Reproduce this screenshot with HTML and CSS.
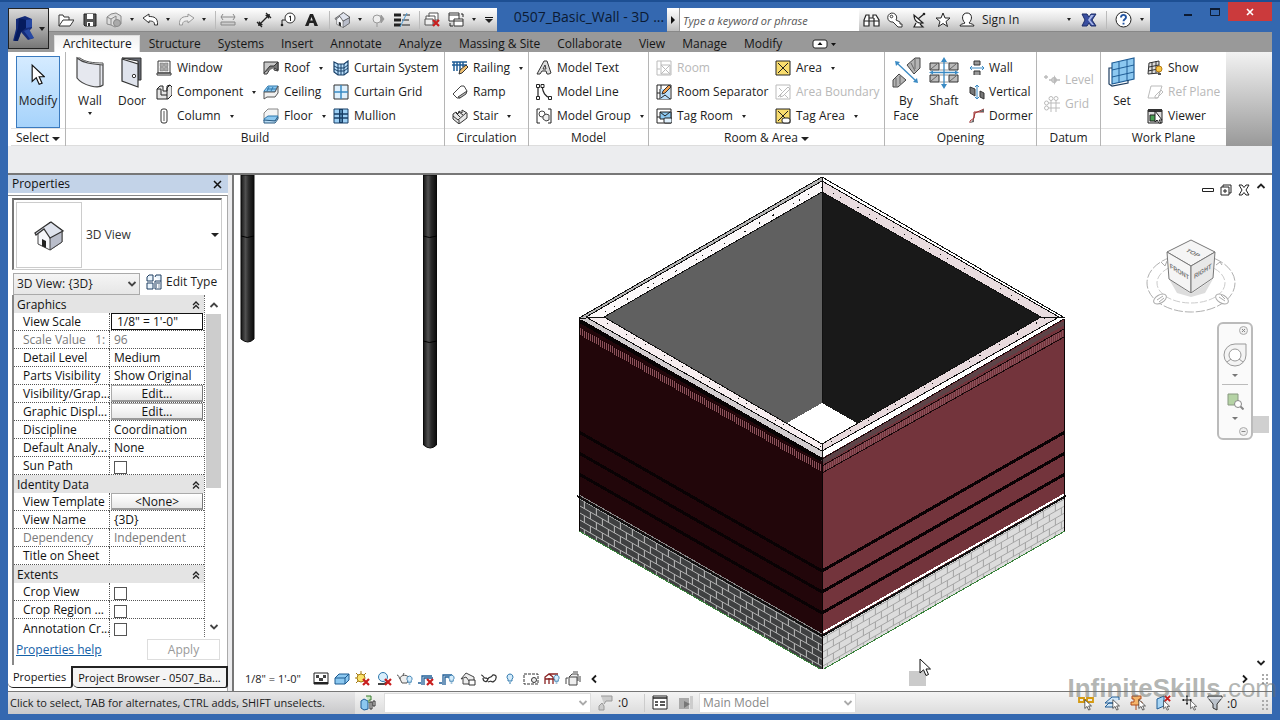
FILE: index.html
```html
<!DOCTYPE html>
<html lang="en">
<head>
<meta charset="utf-8">
<title>0507_Basic_Wall - 3D View</title>
<meta name="viewport" content="width=device-width, initial-scale=1">
<link rel="stylesheet" href="styles.css">
</head>
<body>
<svg class="defs" aria-hidden="true">
  <symbol id="cursor" viewBox="0 0 12 19"><path d="M1 1v14l3.500-3.200 2.500 5.700 2.500-1-2.500-5.500h4.500z" fill="#fff" stroke="#111"/></symbol>
  <symbol id="redx" viewBox="0 0 8 8"><path d="M1 1l6 6M7 1L1 7" stroke="#c81e1e" stroke-width="2.200"/></symbol>
  <symbol id="bulb" viewBox="0 0 8 12"><path d="M4 1a3 3 0 0 0-2 5.200V8h4V6.200A3 3 0 0 0 4 1zM3 10h2" fill="#d5ecfb" stroke="#2f78ad"/></symbol>
  <symbol id="house" viewBox="0 0 32 32"><path d="M4 15L17 3l3 3 9 5v12l-12 8-12-6V15" fill="#f6f7fa" stroke="#444"/><path d="M17 18l12-6v11l-12 8z" fill="#b9bdca" stroke="#444"/><path d="M2 14L12 7 18 3l12 9-13 7-6-9-8 6z" fill="#dfe3ed" stroke="#333" stroke-width="1.300"/><path d="M9 20l4 2v7l-4-2z" fill="#222"/></symbol>
  <symbol id="area" viewBox="0 0 16 16"><path d="M1 1h14v14H1z" fill="#f8dc6d" stroke="#222"/><path d="M3 3l10 10M13 3L3 13" stroke="#222"/></symbol>
  <symbol id="chev" viewBox="0 0 10 8"><path d="M1.500 2L5 5.500 8.500 2" fill="none" stroke="currentColor" stroke-width="1.800"/></symbol>
  <symbol id="collapse" viewBox="0 0 8 8"><path d="M1 4l3-3 3 3M1 7.500l3-3 3 3" fill="none" stroke="#222" stroke-width="1.300"/></symbol>
</svg>

<header class="top">
  <div class="app-cell">
    <button class="app-button" aria-label="Application menu">
      <svg width="24" height="28" viewBox="0 0 24 28"><path d="M3 4l9-3 7 3v9l-4 4 6 6-6 2-7-8-2 6-6 3 3-12z" fill="#142b78"/><path d="M6 3l7 2v8l-5 4-3 9-4 0 4-13z" fill="#061b5e"/><path d="M13 5l6-1v8l-6 1zM11 16l5-2 5 9-4 1z" fill="#2648a3"/></svg>
      <span class="tri mid-tri"></span>
    </button>
  </div>
  <div class="titlebar">
    <div class="qat">
      <button class="q" aria-label="Open"><svg width="16" height="14" viewBox="0 0 16 14"><path d="M1 13V2h4l1 2h5v3M1 13l4-6h11l-4 6z" fill="#fff" stroke="#333"/></svg></button>
      <button class="q" aria-label="Save"><svg width="14" height="14" viewBox="0 0 14 14"><path d="M1 1h12v12H2l-1-1z" fill="#555" stroke="#222"/><path d="M4 1h6v5H4zM4 9h6v4H4z" fill="#fff"/><path d="M5 10h2v3H5z" fill="#333"/></svg></button>
      <button class="q" aria-label="Synchronize"><svg width="17" height="16" viewBox="0 0 17 16"><path d="M1 5l4-3 5-1 5 3v8l-6 3-4-2-4-1zM1 5l4 2 5-3M5 7v6M10 4v4" fill="#ddd" stroke="#888"/><circle cx="11" cy="11" r="3.500" fill="#aaa" stroke="#888"/></svg></button>
      <button class="dd" aria-label="Synchronize options"><span class="tri"></span></button>
      <button class="q" aria-label="Undo"><svg width="17" height="13" viewBox="0 0 17 13"><path d="M1 5l6-4v2.500c5 0 9 1 8.500 8.500h-3c0-3-1-4-5.500-4V10z" fill="#fff" stroke="#333"/></svg></button>
      <button class="dd" aria-label="Undo list"><span class="tri"></span></button>
      <button class="q" aria-label="Redo"><svg width="17" height="13" viewBox="0 0 17 13"><path d="M16 5l-6-4v2.500C5 3.500 1 4.500 1.500 12h3c0-3 1-4 5.500-4v2z" fill="#eee" stroke="#999"/></svg></button>
      <button class="dd" aria-label="Redo list"><span class="tri"></span></button>
      <span class="sep"></span>
      <button class="q" aria-label="Measure"><svg width="16" height="14" viewBox="0 0 16 14"><path d="M1 4h14M3 1L1 4l2 3M13 1l2 3-2 3" stroke="#888" fill="none"/><path d="M1 9h14v3H1z" fill="#ccc" stroke="#888"/></svg></button>
      <button class="dd" aria-label="Measure options"><span class="tri"></span></button>
      <button class="q" aria-label="Aligned dimension"><svg width="16" height="16" viewBox="0 0 16 16"><path d="M3 13L13 3M1 10l5 5M10 1l5 5" stroke="#222" stroke-width="1.300"/><path d="M2 14l1-5 4 4zM14 2l-5 1 4 4z" fill="#222"/></svg></button>
      <button class="q" aria-label="Tag by category"><svg width="16" height="16" viewBox="0 0 16 16"><circle cx="10" cy="6" r="5" fill="#fff" stroke="#333"/><path d="M9 5l1.500-1v5M5 8H2v5" stroke="#222" fill="none"/><circle cx="2" cy="13" r="1.300" fill="#222"/></svg></button>
      <button class="q" aria-label="Text"><svg width="14" height="14" viewBox="0 0 14 14"><path d="M0 13L5 1h3l5 12h-3.500L8.500 10h-4L3.500 13zM5.300 7.500h2.500L6.500 4z" fill="#222" fill-rule="evenodd"/></svg></button>
      <span class="sep"></span>
      <button class="q" aria-label="Default 3D view"><svg width="17" height="17"><use href="#house"/></svg></button>
      <button class="dd" aria-label="3D view options"><span class="tri"></span></button>
      <button class="q" aria-label="Section"><svg width="14" height="14" viewBox="0 0 14 14"><circle cx="6" cy="6" r="4" fill="#eee" stroke="#999"/><path d="M10 2l3 4-3 4zM6 10v4" fill="#999" stroke="#999"/></svg></button>
      <button class="q" aria-label="Thin lines"><svg width="17" height="16" viewBox="0 0 17 16"><path d="M0 3h7M0 8h7M0 13h7" stroke="#222" stroke-width="3"/><path d="M9 3h7M8 8h7M8 13h8" stroke="#222"/><path d="M13 1L6 15" stroke="#4a9ad4"/></svg></button>
      <span class="sep"></span>
      <button class="q" aria-label="Close hidden windows"><svg width="17" height="16" viewBox="0 0 17 16"><path d="M5 5V1h9v7h-3M2 8V4h9v7H2" fill="#fff" stroke="#555"/><path d="M1 7h8v6H1z" fill="#eee" stroke="#555"/><use href="#redx" x="8" y="7" width="8" height="8"/></svg></button>
      <button class="q" aria-label="Switch windows"><svg width="17" height="16" viewBox="0 0 17 16"><path d="M1 1h10v8H1zM1 3h10" fill="#fff" stroke="#333"/><path d="M6 7h9v7H6zM6 9h9" fill="#fff" stroke="#333"/><path d="M2 11v3h3M13 2h2v3" stroke="#222" fill="none"/></svg></button>
      <button class="dd" aria-label="Window list"><span class="tri"></span></button>
      <button class="cust" aria-label="Customize toolbar"><span class="bar"></span><span class="tri lg"></span></button>
    </div>
    <div class="doc-title">0507_Basic_Wall - 3D ...</div>
    <div class="info">
      <button class="info-arrow" aria-label="Expand"><svg width="6" height="8" viewBox="0 0 6 8"><path d="M1 0l4 4-4 4z" fill="#111"/></svg></button>
      <input class="search" type="text" placeholder="Type a keyword or phrase" aria-label="Search">
      <button class="q" aria-label="Find"><svg width="17" height="16" viewBox="0 0 17 16"><path d="M1 14V8l2-5h3v3h4V3h3l3 5v6h-5V9H6v5zM1 9h5M11 9h5M6 6v3M11 6v3" fill="#fff" stroke="#222" stroke-width="1.200"/></svg></button>
      <button class="q" aria-label="Subscription"><svg width="17" height="16" viewBox="0 0 17 16"><path d="M9 8a4.500 4.500 0 1 0-3 2l5 5h4v-3h-2v-2z" fill="#fff" stroke="#333"/><circle cx="4.500" cy="4.500" r="1.300" fill="none" stroke="#333"/></svg></button>
      <button class="q" aria-label="Communication"><svg width="15" height="16" viewBox="0 0 15 16"><path d="M2 3c0 6 4 9 9 8zM6 7l6-5M4 11l-2 4h9l-3-3" fill="#fff" stroke="#222" stroke-width="1.200"/><circle cx="12" cy="2" r="1.300" fill="#222"/></svg></button>
      <button class="q" aria-label="Favorites"><svg width="16" height="16" viewBox="0 0 16 16"><path d="M8 1l2 5h5l-4 3.500 1.500 5L8 11.500l-4.500 3 1.500-5L1 6h5z" fill="#fff" stroke="#222"/></svg></button>
      <button class="signin"><svg width="16" height="16" viewBox="0 0 16 16"><path d="M1 14c0-2 3-2 5-3-4-4-3-10 2-10s6 6 2 10c2 1 5 1 5 3z" fill="#fff" stroke="#222"/></svg><span>Sign In</span><span class="tri"></span></button>
      <button class="q xchg" aria-label="Exchange apps"><svg width="16" height="14" viewBox="0 0 16 14"><path d="M1 1h5l2 3 2-3h5l-4 6 4 6h-5l-2-3-2 3H1l3-6z" fill="#3a4fa0" stroke="#1c2c66"/><path d="M10 2h3l-4 5 4 5h-2L7 7z" fill="#a9b7e8"/></svg></button>
      <span class="sep"></span>
      <button class="help" aria-label="Help"><svg width="17" height="17" viewBox="0 0 17 17"><circle cx="8.500" cy="8.500" r="7.500" fill="#fff" stroke="#222"/><path d="M6 6.500C6 3 11 3 11 6.300c0 2-2.500 1.900-2.500 4M8.500 11.700v1.800" fill="none" stroke="#2354a0" stroke-width="1.900"/></svg></button>
      <button class="dd" aria-label="Help menu"><span class="tri"></span></button>
    </div>
    <div class="win">
      <button aria-label="Minimize"><svg width="10" height="10" viewBox="0 0 10 10"><path d="M1 8h8" stroke="#0c1b33" stroke-width="2"/></svg></button>
      <button aria-label="Maximize"><svg width="10" height="10" viewBox="0 0 10 10"><path d="M.5 1.500h9v7h-9z" fill="none" stroke="#0c1b33"/><path d="M0 2h10" stroke="#0c1b33" stroke-width="2"/></svg></button>
      <button class="close" aria-label="Close"><svg width="8" height="8" viewBox="0 0 8 8"><path d="M1 1l6 6M7 1L1 7" stroke="#fff" stroke-width="1.600"/></svg></button>
    </div>
  </div>
  <nav class="tabs">
    <button class="active">Architecture</button><button>Structure</button><button>Systems</button><button>Insert</button><button>Annotate</button><button>Analyze</button><button>Massing &amp; Site</button><button>Collaborate</button><button>View</button><button>Manage</button><button>Modify</button>
    <button class="toggle" aria-label="Minimize ribbon"><svg width="24" height="10" viewBox="0 0 24 10"><rect x="1" y="1" width="14" height="8" rx="2" fill="#fff" stroke="#222"/><path d="M5.500 6L8 3l2.500 3zM19 4h5l-2.500 3z" fill="#111"/></svg></button>
  </nav>
</header>

<section class="ribbon">
  <div class="panel select">
    <div class="tools">
      <button class="big on"><svg width="14" height="24"><use href="#cursor"/></svg><span>Modify</span></button>
    </div>
    <div class="cap">Select <span class="tri lg"></span></div>
  </div>
  <div class="panel build">
    <div class="tools">
      <button class="big"><svg width="30" height="34" viewBox="0 0 30 34"><path d="M2 2c6 5 14 6 26 7v20c-4 4-20 1-26-7z" fill="#e6e8ef" stroke="#444" stroke-width="1.200"/><path d="M2 2l3 0c5 4 13 5 23 5v2M25 9v21" fill="none" stroke="#555"/></svg><span>Wall</span><span class="tri"></span></button>
      <button class="big door"><svg width="24" height="34" viewBox="0 0 24 34"><path d="M2 2h19v22h-3V5z" fill="#666a74" stroke="#333"/><path d="M2 3l16 5v23L2 25z" fill="#dfe3ec" stroke="#333" stroke-width="1.200"/><circle cx="14" cy="20" r="1.700" fill="#fff" stroke="#333"/></svg><span>Door</span></button>
      <div class="col c1">
        <button><svg class="i" viewBox="0 0 16 16"><path d="M2 1h12v12H2zM1 13h14v2H1z" fill="#fff" stroke="#333"/><path d="M4 3h3.500v3.500H4zM8.500 3H12v3.500H8.500zM4 7.500h3.500V11H4zM8.500 7.500H12V11H8.500z" fill="#aaa" stroke="#666" stroke-width=".5"/></svg>Window</button>
        <button><svg class="i" viewBox="0 0 16 16"><path d="M1 5l3-3h3v5h4V2l3-1 2 2v8l-4 4H1z" fill="#e5e5e5" stroke="#222"/><path d="M1 5h4v6h6V4l3-3M11 11v4" fill="none" stroke="#222"/></svg>Component<span class="tri"></span></button>
        <button><svg class="i" viewBox="0 0 16 16"><rect x="5" y="1" width="6" height="14" rx="2" fill="#fff" stroke="#333"/><path d="M8 3v10" stroke="#aaa" stroke-width="2"/></svg>Column<span class="tri"></span></button>
      </div>
      <div class="col c2">
        <button><svg class="i" viewBox="0 0 16 16"><path d="M1 2h14v9l-4-1v-3H8l-4 7H1z" fill="#c8c8c8" stroke="#333"/><path d="M1 13L7 6h4l4-4v8l-4-2" fill="#777" stroke="#333"/></svg>Roof<span class="tri"></span></button>
        <button><svg class="i" viewBox="0 0 16 16"><path d="M1 7l4-5h10l-3 6H1z" fill="#8cc8f0" stroke="#2f78ad"/><path d="M1 8h11l3-6v7l-3 4H4l-3 2z" fill="#f0f0f0" stroke="#555"/><path d="M4 5h9M6 3l-2 4M10 3L8 7" stroke="#2f78ad"/></svg>Ceiling</button>
        <button><svg class="i" viewBox="0 0 16 16"><path d="M1 11V5l4-4h10v8" fill="#f4f4f4" stroke="#888"/><path d="M1 11l4-3h10l-3 5H1z" fill="#8cc8f0" stroke="#2f78ad"/><path d="M1 12v3h11l3-4V9l-3 4z" fill="#b8dcf4" stroke="#2c5a80"/></svg>Floor<span class="tri"></span></button>
      </div>
      <div class="col c3">
        <button><svg class="i" viewBox="0 0 16 16"><path d="M1 2l4 2h6l4-3v11l-4 3H5l-4-3z" fill="#b9defa" stroke="#173e66" stroke-width="1.200"/><path d="M5 4v11M8 4v11M11 4v11M1 6l4 2h6l4-3M1 9l4 2h6l4-3" fill="none" stroke="#173e66"/></svg>Curtain System</button>
        <button><svg class="i" viewBox="0 0 16 16"><path d="M1 1h14v14H1z" fill="#dff0fc" stroke="#333"/><path d="M8 1v14M1 8h14" stroke="#3a8ac4" stroke-width="1.500"/></svg>Curtain Grid</button>
        <button><svg class="i" viewBox="0 0 16 16"><path d="M1 1h14v14H1z" fill="#9dd0f5" stroke="#173e66"/><path d="M8 1v14" stroke="#173e66" stroke-width="4"/><path d="M8 2v12" stroke="#8cc8f0"/><path d="M1 6h14M1 10h14" stroke="#173e66" stroke-width="1.500"/></svg>Mullion</button>
      </div>
    </div>
    <div class="cap">Build</div>
  </div>
  <div class="panel circ">
    <div class="tools"><div class="col">
      <button><svg class="i" viewBox="0 0 16 16"><path d="M0 2h15M0 5h15M2 2v9M5 2v9M8 2v9M11 2v5" stroke="#1f5d96" stroke-width="1.500"/><path d="M7 14l1-4 6-5 2 2-6 6z" fill="#f0c070" stroke="#333"/></svg>Railing<span class="tri"></span></button>
      <button><svg class="i" viewBox="0 0 16 16"><path d="M1 10L9 2h3l3 5-7 7H5z" fill="#fff" stroke="#444"/><path d="M6 13l9-6-1 3-6 4z" fill="#bbb" stroke="#444"/></svg>Ramp</button>
      <button><svg class="i" viewBox="0 0 16 16"><path d="M1 6l3-2 2 2 1-3 3 2 0-3 5 3v5l-8 6-6-5z" fill="#e8e8e8" stroke="#333"/><path d="M1 8l5 4 8-7M4 5l4 4M7 4l4 3M7 12v3" fill="none" stroke="#333"/></svg>Stair<span class="tri"></span></button>
    </div></div>
    <div class="cap">Circulation</div>
  </div>
  <div class="panel model">
    <div class="tools"><div class="col">
      <button><svg class="i" viewBox="0 0 16 16"><path d="M1 14L8 1h3l4 12-2 1h-2l-1-3H6l-2 3zM7 9h3L9 5z" fill="#ddd" stroke="#333" fill-rule="evenodd"/></svg>Model Text</button>
      <button><svg class="i" viewBox="0 0 16 16"><path d="M2 2v12M6 2c1 7 3 10 8 12" stroke="#222" fill="none" stroke-width="1.200"/><path d="M.5.500h3v3h-3zM.5 12.500h3v3h-3zM5 .5h3v3H5zM12.500 12.500h3v3h-3z" fill="#fff" stroke="#222"/></svg>Model Line</button>
      <button><svg class="i" viewBox="0 0 16 16"><path d="M4 1H1v14h3M12 1h3v14h-3" fill="none" stroke="#222"/><circle cx="6" cy="6" r="3" fill="#fff" stroke="#444"/><path d="M7 8l3-2 3 1v5l-3 1-3-2z" fill="#eee" stroke="#444"/></svg>Model Group<span class="tri"></span></button>
    </div></div>
    <div class="cap">Model</div>
  </div>
  <div class="panel room">
    <div class="tools">
      <div class="col r1">
        <button disabled><svg class="i" viewBox="0 0 16 16"><path d="M1 15V1h14v14zM1 9h3M5 1v4M5 5h9v9H5zM5 5l9 9M14 5l-9 9" fill="none" stroke="#bbb"/></svg>Room</button>
        <button><svg class="i" viewBox="0 0 16 16"><path d="M1 1h14v14H1z" fill="#fff" stroke="#222"/><path d="M4 5h10v10H4z" fill="#b9defa"/><path d="M5 1v4M1 9h3M4 5v10M5 14l4-3 5 4" fill="none" stroke="#222"/><path d="M6 10l1-3 6-6 2 2-6 6z" fill="#f0a050" stroke="#333"/></svg>Room Separator</button>
        <button><svg class="i" viewBox="0 0 16 16"><path d="M1 1h14v14H1z" fill="#fff" stroke="#222"/><path d="M4 4h11v7H4z" fill="#8cc8f0" stroke="#222"/><path d="M4 4l5 4 5-4M1 9h3" fill="none" stroke="#222"/><rect x="8" y="10" width="8" height="5" rx="1" fill="#dff0fc" stroke="#222"/></svg>Tag Room<span class="tri"></span></button>
      </div>
      <div class="col">
        <button><svg class="i"><use href="#area"/></svg>Area<span class="tri"></span></button>
        <button disabled><svg class="i" viewBox="0 0 16 16"><path d="M1 1h14v14H1zM3 13L13 3M4 4l3 3M9 10l4 4M5 13l1-3 7-7 2 2-7 7z" fill="none" stroke="#bbb"/></svg>Area Boundary</button>
        <button><svg class="i" viewBox="0 0 16 16"><use href="#area" width="16" height="16"/><rect x="7" y="10" width="8" height="5" rx="2" fill="#fff" stroke="#222"/></svg>Tag Area<span class="tri"></span></button>
      </div>
    </div>
    <div class="cap">Room &amp; Area <span class="tri lg"></span></div>
  </div>
  <div class="panel opening">
    <div class="tools">
      <button class="big"><svg width="30" height="34" viewBox="0 0 30 34"><path d="M16 9l8-7h5v10l-6 6zM2 24l6-6 7 6-8 7H2z" fill="#b4b4b4" stroke="#444"/><path d="M20 7l4 8M24 3v10M5 22v8M9 20v8" stroke="#666"/><path d="M6 7l19 18" stroke="#3a8ac4" stroke-width="1.300"/><path d="M4 5l1 5 4-4zM27 27l-1-5-4 4z" fill="#3a8ac4"/></svg><span>By<br>Face</span></button>
      <button class="big"><svg width="30" height="34" viewBox="0 0 30 34"><path d="M1 7h9v7H1zM20 7h9v7h-9zM1 19h9v7H1zM20 19h9v7h-9z" fill="#bbb" stroke="#333"/><path d="M2 13l6-5M21 13l6-5M2 25l6-5M21 25l6-5" stroke="#666"/><path d="M10 7h10M10 14h10M10 19h10M10 26h10" stroke="#999"/><path d="M15 4v26M3 16.500h24" stroke="#3a8ac4" stroke-width="1.300"/><path d="M15 1l3 5h-6zM15 33l3-5h-6zM0 16.500l4-2v4zM30 16.500l-4-2v4z" fill="#3a8ac4"/></svg><span>Shaft</span></button>
      <div class="col">
        <button><svg class="i" viewBox="0 0 16 16"><path d="M5 1h6v4H5zM5 15v-4h6v4" fill="#999" stroke="#333"/><path d="M1 8h14M3 6L1 8l2 2M13 6l2 2-2 2" fill="none" stroke="#3a8ac4"/></svg>Wall</button>
        <button><svg class="i" viewBox="0 0 16 16"><path d="M1 3l5 2v7l-5-3zM11 7l4 2v6l-4-2z" fill="#777" stroke="#333"/><path d="M8 1v14M6 3l2-2 2 2M6 13l2 2 2-2" fill="none" stroke="#3a8ac4"/></svg>Vertical</button>
        <button><svg class="i" viewBox="0 0 16 16"><path d="M1 15V13L5 10V4h10M4 13l2-8 9-4" fill="none" stroke="#a03030"/><path d="M10 4l5-3v3zM1 15l4-4v3z" fill="#666"/></svg>Dormer</button>
      </div>
    </div>
    <div class="cap">Opening</div>
  </div>
  <div class="panel datum">
    <div class="tools"><div class="col mid">
      <button disabled><svg class="i" viewBox="0 0 16 16"><path d="M0 5h4M2 3v4M5 8h11" stroke="#bbb" stroke-width="1.300"/><circle cx="10" cy="8" r="2.500" fill="#ccc" stroke="#bbb"/><path d="M10 3l3 5-3 5z" fill="#bbb"/></svg>Level</button>
      <button disabled><svg class="i" viewBox="0 0 16 16"><path d="M4 7h12M4 12h12M7 4v12M12 4v12" stroke="#bbb"/><circle cx="7" cy="2.500" r="2" fill="#fff" stroke="#bbb"/><circle cx="12" cy="2.500" r="2" fill="#fff" stroke="#bbb"/><circle cx="2.500" cy="7" r="2" fill="#fff" stroke="#bbb"/><circle cx="2.500" cy="12" r="2" fill="#fff" stroke="#bbb"/></svg>Grid</button>
    </div></div>
    <div class="cap">Datum</div>
  </div>
  <div class="panel plane">
    <div class="tools">
      <button class="big"><svg width="30" height="34" viewBox="0 0 30 34"><path d="M5 7l22-5v21L5 28z" fill="#8cc8f0" stroke="#1f5d96" stroke-width="1.200"/><path d="M12 6v21M20 4v21M5 14l22-5M5 21l22-5" stroke="#1f5d96"/><path d="M5 12H2v16l3 2 16-3v-3" fill="none" stroke="#1d3d60" stroke-width="1.200"/></svg><span>Set</span></button>
      <div class="col">
        <button><svg class="i" viewBox="0 0 16 16"><path d="M2 3l10-2v12L1 14zM5 2v12M9 1v12M2 7l10-2M1 11l10-2" fill="#ddd" stroke="#333"/><circle cx="12" cy="9" r="3" fill="#f9c84a" stroke="#b77c12"/><path d="M11 13h3v2h-3z" fill="#555"/></svg>Show</button>
        <button disabled><svg class="i" viewBox="0 0 16 16"><path d="M4 2h11l-4 12H1zM8 12l6-6 2 2-6 6H8z" fill="#fff" stroke="#bbb"/></svg>Ref Plane</button>
        <button><svg class="i" viewBox="0 0 16 16"><path d="M1 2h14v13H1z" fill="#ddd" stroke="#222"/><path d="M1 1h14v3H1z" fill="#333"/><path d="M3 7h7v6H3z" fill="#49a052" stroke="#222"/><path d="M8 3l7 9h-3l2 3-2 0-2-3-2 2z" fill="#fff" stroke="#222"/></svg>Viewer</button>
      </div>
    </div>
    <div class="cap">Work Plane</div>
  </div>
  <div class="ribbon-rest"></div>
</section>
<div class="options"></div>

<main class="main">
  <aside class="palette">
    <div class="pal-head"><span>Properties</span><button aria-label="Close palette"><svg width="9" height="9" viewBox="0 0 9 9"><path d="M1 1l7 7M8 1L1 8" stroke="#111" stroke-width="1.500"/></svg></button></div>
    <div class="pal-body">
      <button class="type"><span class="thumb"><svg width="32" height="32"><use href="#house"/></svg></span><span class="type-name">3D View</span><span class="tri lg"></span></button>
      <div class="inst">
        <div class="combo"><select aria-label="Instance"><option>3D View: {3D}</option></select><svg width="10" height="8"><use href="#chev"/></svg></div>
        <button class="edit-type"><svg width="16" height="16" viewBox="0 0 16 16"><path d="M1 3l2-2h4v6H1zM9 3l1-2h5v6M1 9h6v6H1z" fill="#eaf4fc" stroke="#1d3d60"/><path d="M9 7h6v8H9zM10 9h4M10 11h1M12.500 11h1M10 13h1M12.500 13h1" fill="#fff" stroke="#1d3d60"/></svg>Edit Type</button>
      </div>
      <div class="grid-wrap">
        <table class="props">
          <tr class="sec"><th colspan="2">Graphics<svg width="8" height="8"><use href="#collapse"/></svg></th></tr>
          <tr><td><label for="vs">View Scale</label></td><td class="tight"><input id="vs" class="scale" type="text" value="1/8&quot; = 1'-0&quot;"></td></tr>
          <tr class="off"><td>Scale Value &nbsp; 1:</td><td>96</td></tr>
          <tr><td>Detail Level</td><td>Medium</td></tr>
          <tr><td>Parts Visibility</td><td>Show Original</td></tr>
          <tr><td>Visibility/Grap...</td><td class="tight"><button>Edit...</button></td></tr>
          <tr><td>Graphic Displ...</td><td class="tight"><button>Edit...</button></td></tr>
          <tr><td>Discipline</td><td>Coordination</td></tr>
          <tr><td>Default Analy...</td><td>None</td></tr>
          <tr><td><label for="sun">Sun Path</label></td><td><input id="sun" type="checkbox"></td></tr>
          <tr class="sec"><th colspan="2">Identity Data<svg width="8" height="8"><use href="#collapse"/></svg></th></tr>
          <tr><td>View Template</td><td class="tight"><button>&lt;None&gt;</button></td></tr>
          <tr><td>View Name</td><td>{3D}</td></tr>
          <tr class="off"><td>Dependency</td><td>Independent</td></tr>
          <tr><td>Title on Sheet</td><td></td></tr>
          <tr class="sec"><th colspan="2">Extents<svg width="8" height="8"><use href="#collapse"/></svg></th></tr>
          <tr><td><label for="crop">Crop View</label></td><td><input id="crop" type="checkbox"></td></tr>
          <tr><td><label for="region">Crop Region ...</label></td><td><input id="region" type="checkbox"></td></tr>
          <tr class="last"><td><label for="anno">Annotation Cr...</label></td><td><input id="anno" type="checkbox"></td></tr>
        </table>
        <div class="scroll">
          <svg class="up" width="10" height="8"><use href="#chev"/></svg>
          <div class="thumb-bar"></div>
          <svg width="10" height="8"><use href="#chev"/></svg>
        </div>
      </div>
      <div class="pal-foot"><a href="#help">Properties help</a><button disabled>Apply</button></div>
    </div>
    <div class="pal-tabs"><button class="cur">Properties</button><button>Project Browser - 0507_Ba...</button></div>
  </aside>

  <section class="view">
    <div class="canvas">
      <svg class="scene" viewBox="234 175 1038 494" preserveAspectRatio="xMinYMin meet">
        <defs>
          <linearGradient id="pipe"><stop offset="0" stop-color="#151515"/><stop offset=".35" stop-color="#505050"/><stop offset=".6" stop-color="#2a2a2a"/><stop offset="1" stop-color="#0c0c0c"/></linearGradient>
          <pattern id="blockL" width="12" height="14" patternUnits="userSpaceOnUse" patternTransform="matrix(1 .575 0 1 579 498)"><path d="M0 .5h12M0 7.500h12M5.500 0v7M11.500 7v7" stroke="#b4b4b4" fill="none"/></pattern>
          <pattern id="blockR" width="12" height="14" patternUnits="userSpaceOnUse" patternTransform="matrix(1 -.575 0 1 822 638)"><path d="M0 .5h12M0 7.500h12M5.500 0v7M11.500 7v7" stroke="#a5a5a5" fill="none"/></pattern>
          <pattern id="soldier" width="2" height="20" patternUnits="userSpaceOnUse"><path d="M0 0h1v20H0z" fill="#8b5059"/></pattern>
        </defs>
        <g>
          <path d="M241 175h13v164q-6 6-13 0z" fill="url(#pipe)" stroke="#0a0a0a"/>
          <path d="M241 236q6 3 13 0" fill="none" stroke="#000"/>
          <path d="M423.500 175h13v270q-6 6-13 0z" fill="url(#pipe)" stroke="#0a0a0a"/>
          <path d="M423 236q6 3 14 0M423 341q6 3 14 0" fill="none" stroke="#000"/>
        </g>
        <g shape-rendering="crispEdges">
          <path d="M822 177L579 318l243 140V181z" fill="#b5b5b5"/>
          <path d="M822 181L586 317l18 1 218-126z" fill="#fbf8f9"/>
          <path d="M822 177l243 141-24-1-219-125z" fill="#e9dcdf"/>
          <path d="M822 177l243 141-6-1-237-136z" fill="#fff"/>
          <path d="M822 192L604 317l183 107 35-21z" fill="#606060"/>
          <path d="M822 192l219 125-184 106-35-20z" fill="#191919"/>
          <path d="M822 403l-35 20 35 21 35-21z" fill="#fff"/>
          <path d="M604 317l218 127v7L586 317z" fill="#f7eef0"/>
          <path d="M586 317l236 134v7L579 319z" fill="#d2cdcf"/>
          <path d="M1041 317L822 444v7l237-134z" fill="#e8dadd"/>
          <path d="M1059 317L822 451v7l243-139z" fill="#fff"/>
          <g fill="none" stroke="#111">
            <path d="M579 318l243-141 243 141M586 317l236-136 237 136M604 317l218-125 219 125M604 317l218 127 219-127M586 317l236 134 237-134M579 318h7l18-1M1065 318l-7-1h-17M822 177v15M822 444v14M822 192v211"/>
            <path d="M605 312L822 187" stroke-dasharray="1 9 1 14 2 22 1 6"/>
            <path d="M822 187l219 125" stroke-dasharray="1 12 1 7 1 19"/>
            <path d="M597 317l225 130 225-130" stroke-dasharray="1 11 1 21 1 8"/>
          </g>
          <path d="M579 319l243 139v177L579 496z" fill="#22060a"/>
          <path d="M1065 319L822 458v177l243-139z" fill="#73343c"/>
          <path d="M580 321l242 139" stroke="#080304" stroke-width="4"/>
          <path d="M580 328l242 137v7L580 335z" fill="url(#soldier)"/>
          <path d="M1064 323L822 462" stroke="#5c4448" stroke-width="4"/>
          <path d="M1064 329L822 466v7l242-137z" fill="url(#soldier)"/>
          <path d="M1064 319L822 459M1064 329L822 466M1064 337L822 473" stroke="#17080a" fill="none"/>
          <path d="M579 432l243 139 243-139M579 453l243 139 243-139M579 474l243 139 243-139" fill="none" stroke="#090204" stroke-width="3"/>
          <path d="M579 496l243 139v35L579 531z" fill="#3f4041"/>
          <path d="M579 496l243 139v35L579 531z" fill="url(#blockL)"/>
          <path d="M1065 496L822 635v35l243-139z" fill="#dcdcdc"/>
          <path d="M1065 496L822 635v35l243-139z" fill="url(#blockR)"/>
          <path d="M577 496l245 140 244-140" fill="none" stroke="#111" stroke-width="2"/>
          <path d="M579 495l243 139" stroke="#888"/>
          <path d="M822 633l243-139" stroke="#fff" stroke-width="2"/>
          <path d="M579 531l243 139 243-139" fill="none" stroke="#39833b"/>
          <path d="M579.500 319v212M822 458v212M1064.500 319v212" stroke="#0a0405"/>
        </g>
      </svg>
      <div class="doc-buttons">
        <button aria-label="Minimize view"><svg width="12" height="6" viewBox="0 0 12 6"><path d="M.5 1.500h11v3H.5z" fill="#fff" stroke="#222"/></svg></button>
        <button aria-label="Restore view"><svg width="12" height="12" viewBox="0 0 12 12"><path d="M3 3V1h8v8H9M1 3h8v8H1zM4 6h2v2H4z" fill="#fff" stroke="#222"/></svg></button>
        <button aria-label="Close view"><svg width="12" height="12" viewBox="0 0 12 12"><path d="M1 1h3l2 2.500L8 1h3L8 6l3 5H8L6 8.500 4 11H1l3-5z" fill="#fff" stroke="#222"/></svg></button>
      </div>
      <svg class="cube" width="100" height="80" viewBox="0 0 100 80">
        <g fill="none" stroke="#b0b0b0"><ellipse cx="50" cy="46" rx="44" ry="29" stroke-dasharray="9 2"/><ellipse cx="50" cy="46" rx="34" ry="20" stroke="#ccc" stroke-dasharray="7 2"/></g>
        <path d="M28 42l22 15 22-15-8 14-14 4-14-4z" fill="#ddd"/>
        <g fill="#f5f5f5" stroke="#777"><path d="M50 3l24 12-24 14L26 15z"/><path d="M26 15l24 14v27L28 42z"/><path d="M74 15L50 29v27l22-15z" fill="#e8e8e8"/></g>
        <g class="cube-text"><text transform="matrix(.88 .45 -.7 .5 44 14)">TOP</text><text transform="matrix(.8 .5 .08 1 29 31)">FRONT</text><text transform="matrix(.8 -.5 -.03 1 53 42)">RIGHT</text></g>
        <g fill="#fff" stroke="#aaa"><ellipse cx="19" cy="62" rx="7" ry="4" transform="rotate(-30 19 62)"/><ellipse cx="81" cy="62" rx="7" ry="4" transform="rotate(30 81 62)"/><path d="M16 63l6-4M18 65l5-4M78 60l6 4M80 58l4 4M20 25l4 4 2-5M75 28l4-3 2 3"/></g>
      </svg>
      <div class="nav">
        <button aria-label="Close navigation bar"><svg width="9" height="9" viewBox="0 0 9 9"><circle cx="4.500" cy="4.500" r="4" fill="#eee" stroke="#aaa"/><path d="M3 3l3 3M6 3L3 6" stroke="#888"/></svg></button>
        <button class="n" aria-label="Steering wheel"><svg width="24" height="24" viewBox="0 0 24 24"><path d="M12 1h11v11a11 11 0 1 1-11-11z" fill="#f4f4f4" stroke="#999"/><circle cx="12" cy="12" r="6" fill="#fff" stroke="#999"/><path d="M4 19l4-3M20 19l-4-3" stroke="#999"/></svg><span class="tri"></span></button>
        <span class="rule"></span>
        <button class="n" aria-label="Zoom"><svg width="17" height="17" viewBox="0 0 17 17"><path d="M1 1h10v11H1z" fill="#b5d3a5" stroke="#889880"/><circle cx="11" cy="11" r="3.500" fill="#fff" stroke="#888"/><path d="M13.500 13.500l3 3" stroke="#888" stroke-width="2"/></svg><span class="tri"></span></button>
        <button aria-label="Navigation options"><svg width="9" height="9" viewBox="0 0 9 9"><circle cx="4.500" cy="4.500" r="4" fill="#eee" stroke="#aaa"/><path d="M2.500 4.500h4" stroke="#888"/></svg></button>
      </div>
      <div class="vscroll"><svg class="up" width="10" height="8"><use href="#chev"/></svg><span class="vthumb"></span><svg width="10" height="8"><use href="#chev"/></svg></div>
      <span class="hthumb"></span>
      <svg class="pointer" width="12" height="19"><use href="#cursor"/></svg>
    </div>
    <div class="viewbar">
      <span class="vscale">1/8" = 1'-0"</span>
      <button aria-label="Detail level"><svg class="i" viewBox="0 0 16 16"><path d="M1 2h14v11H1z" fill="#fff" stroke="#222"/><path d="M3 4h3v3H3zM10 4h3v3h-3zM6 7h4v3H6z" fill="#444"/><path d="M1 12h14" stroke="#222" stroke-width="2"/></svg></button>
      <button aria-label="Visual style"><svg class="i" viewBox="0 0 16 16"><path d="M1 7l4-4h10v6l-4 4H1z" fill="#8cc8f0" stroke="#1d5a90"/><path d="M1 7h10l4-4M11 7v6" fill="none" stroke="#1d5a90"/></svg></button>
      <button aria-label="Sun path"><svg class="i" viewBox="0 0 16 16"><circle cx="6" cy="7" r="4" fill="#fbe36b" stroke="#a57a10"/><path d="M6 0v3M0 7h2M1 2l2 2M11 2L9 4M1 12l2-2" stroke="#a57a10"/><use href="#redx" x="7" y="7" width="8" height="8"/></svg></button>
      <button aria-label="Shadows"><svg class="i" viewBox="0 0 16 16"><circle cx="7" cy="6" r="4.500" fill="#d8eefc" stroke="#2f78ad"/><path d="M2 13h6l3-2" stroke="#444" stroke-width="2" fill="none"/><use href="#redx" x="8" y="7" width="8" height="8"/></svg></button>
      <button aria-label="Rendering"><svg class="i" viewBox="0 0 16 16"><path d="M0 4c2 0 2 3 3 4l2 4h5l2-4c0-5-9-5-9 0M6 4l1-2" fill="#eee" stroke="#555"/><use href="#bulb" x="9" y="4" width="7" height="11"/></svg></button>
      <button aria-label="Crop view"><svg class="i" viewBox="0 0 16 16"><path d="M0 12h3M4 14V5h10M6 14V7h9" fill="none" stroke="#1f5d96" stroke-width="1.300"/><use href="#redx" x="8" y="7" width="8" height="8"/></svg></button>
      <button aria-label="Show crop region"><svg class="i" viewBox="0 0 16 16"><path d="M0 12h3M4 14V4h9M6 14V6h4" fill="none" stroke="#1f5d96" stroke-width="1.300"/><use href="#bulb" x="9" y="3" width="7" height="11"/></svg></button>
      <button aria-label="Lock view"><svg class="i" viewBox="0 0 16 16"><path d="M1 8l5-6 8 4v7H3V8M1 8l5-2 4 5" fill="#eee" stroke="#444"/><path d="M9 9h6v5H9z" fill="#fff" stroke="#333"/></svg></button>
      <button aria-label="Temporary hide"><svg class="i" viewBox="0 0 16 16"><path d="M0 4c3 0 2 4 5 3l2 1c1-3 3-1 4-3 1-2 5-1 4 2 0 3-4 5-5 3M2 7c0 4 4 5 5 1M10 10l-3 1" fill="none" stroke="#333" stroke-width="1.200"/></svg></button>
      <button aria-label="Reveal hidden"><svg class="i" viewBox="0 0 16 16"><use href="#bulb" x="4" y="2" width="8" height="12"/></svg></button>
      <button aria-label="Temporary view"><svg class="i" viewBox="0 0 16 16"><path d="M1 3h14v10H1z" fill="#fff" stroke="#333" stroke-dasharray="3 1"/><circle cx="11" cy="9" r="2.500" fill="#eee" stroke="#333"/></svg></button>
      <button aria-label="Analytical model"><svg class="i" viewBox="0 0 16 16"><path d="M1 13V6l4-3h9M5 13V7M9 13V6M1 8h12M5 3l4 3" fill="none" stroke="#822" stroke-width="1.300"/><use href="#bulb" x="9" y="3" width="7" height="11"/></svg></button>
      <button aria-label="Displacement sets"><svg class="i" viewBox="0 0 16 16"><path d="M4 6h8v8H4zM4 6l3-3h6v7M1 7v6M3 7H1M15 5v6M8 1h5" fill="#eee" stroke="#444"/></svg></button>
      <button aria-label="Scroll left"><svg class="left" width="10" height="8"><use href="#chev"/></svg></button>
      <svg class="right" width="10" height="8"><use href="#chev"/></svg>
      <span class="grip"></span>
    </div>
  </section>
</main>

<footer class="status">
  <span class="msg">Click to select, TAB for alternates, CTRL adds, SHIFT unselects.</span>
  <button class="sb" aria-label="Worksets"><svg class="i" viewBox="0 0 16 16"><path d="M1 6l3-2 4 2v8l-4 1-3-2z" fill="#8cc8f0" stroke="#1f5d96"/><path d="M6 1h5v4H9v3" fill="#c8e8c0" stroke="#3b7a30"/><path d="M10 7h2v7h-2zM13 6h2v5h-2z" fill="#eee" stroke="#333"/></svg></button>
  <div class="combo ws"><select aria-label="Active workset"><option></option></select><svg width="10" height="8"><use href="#chev"/></svg></div>
  <button class="sb req" aria-label="Editing requests"><svg class="i" viewBox="0 0 16 16"><path d="M4 1h11v5H9l-2 3M5 8l-3 3v4h5v-4z" fill="#ccc" stroke="#999"/></svg></button>
  <span class="cnt">:0</span>
  <span class="sep"></span>
  <button class="sb" aria-label="Design options"><svg class="i" viewBox="0 0 16 16"><path d="M1 1h14v13H1z" fill="#fff" stroke="#222"/><path d="M1 3h14M3 7h3M3 10h3M8 7h5M8 10h5" stroke="#222" stroke-width="1.500"/></svg></button>
  <button class="sb" aria-label="Add to set"><svg class="i" viewBox="0 0 16 16"><path d="M1 3h10v11H1z" fill="#aaa"/><path d="M6 6l6 3-6 4z" fill="#777"/><path d="M12 1h3v13h-3z" fill="#ccc"/></svg></button>
  <div class="combo opt"><select aria-label="Design option" disabled><option>Main Model</option></select><svg width="10" height="8"><use href="#chev"/></svg></div>
  <div class="sel">
    <button aria-label="Select links"><svg class="i" viewBox="0 0 16 16"><path d="M1 3h5v4H1zM9 3h6v4H9zM5 5h5" fill="none" stroke="#d49a12" stroke-width="1.800"/><use href="#cursor" x="6" y="4" width="8" height="12"/></svg></button>
    <button aria-label="Select underlay"><svg class="i" viewBox="0 0 16 16"><path d="M1 8l7-6h7v3M1 8h8M1 12h8l3-4H5z" fill="#cfe6f8" stroke="#1f5d96"/><use href="#cursor" x="8" y="4" width="8" height="12"/></svg></button>
    <button aria-label="Select pinned"><svg class="i" viewBox="0 0 16 16"><path d="M2 1h9v3H9v3h3v3H1V7h3V4H2zM6 10v5" fill="#f5b56a" stroke="#b04a1a"/><use href="#cursor" x="8" y="4" width="8" height="12"/></svg></button>
    <button aria-label="Select by face"><svg class="i" viewBox="0 0 16 16"><path d="M1 4l7-3v10l-7 3z" fill="#a9d6f5" stroke="#1f5d96"/><use href="#redx" x="8" y="0" width="7" height="7"/><use href="#cursor" x="7" y="5" width="7" height="11"/></svg></button>
    <button aria-label="Drag on selection"><svg class="i" viewBox="0 0 16 16"><path d="M5 0v10M0 5h10M4 1.500h2M4 8.500h2M1.500 4v2M8.500 4v2" stroke="#222"/><use href="#cursor" x="8" y="5" width="7" height="11"/></svg></button>
    <button class="filter" aria-label="Filter"><svg class="i" viewBox="0 0 16 16"><path d="M1 1h14v2L10 9v6l-4-2V9L1 3z" fill="#bcc3cc" stroke="#333"/><path d="M1 3h14" stroke="#fff"/></svg></button>
    <span class="cnt low">:0</span>
  </div>
  <span class="grip"></span>
</footer>
<div class="mark"><b>InfiniteSkills</b>.com</div>
</body>
</html>
```
FILE: styles.css
```css
* { box-sizing: border-box; }
html { height: 100%; }
body {
  margin: 0;
  min-height: 100%;
  position: relative;
  padding: 0 8px 7px;
  display: flex;
  flex-direction: column;
  overflow-x: hidden;
  background: #3468b0;
  border-top: 2px solid #1d4f93;
  color: #1c1c1c;
  font: 12px/16px "Open Sans", "Noto Sans", sans-serif;
  white-space: nowrap;
}
button, input, select { font: inherit; color: inherit; }
button { border: 0; padding: 0; background: none; display: flex; align-items: center; justify-content: center; }
svg { flex: none; display: block; }
.defs { position: absolute; width: 0; height: 0; }
.i { width: 16px; height: 16px; }
.tri { width: 0; height: 0; flex: none; border: 2px solid transparent; border-top: 3px solid #222; border-bottom: 0; }
.tri.lg { border-width: 4px 4px 0; display: inline-block; vertical-align: middle; }
.mid-tri { border-width: 4px 3px 0; }
.sep { width: 6px; height: 18px; flex: none; border-right: 1px solid #bbb; }
.up { transform: rotate(180deg); }
.left { transform: rotate(90deg); }
.right { transform: rotate(-90deg); }

/* title bar and tabs */
.top { display: grid; grid-template-columns: 41px 1fr; }
.app-cell { grid-row: span 2; padding-top: 6px; background: linear-gradient(#3468b0 6px, #999 6px); }
.app-button { width: 41px; height: 41px; gap: 2px; border: 1px solid #222; background: linear-gradient(#d8d8d8, #777); }
.titlebar { height: 30px; display: flex; align-items: flex-end; }
.qat, .info { height: 24px; display: flex; align-items: center; background: linear-gradient(#fff, #e4e4e4 50%, #bdbdbd); border-bottom: 1px solid #888; }
.qat { padding-left: 5px; }
.q { width: 24px; height: 22px; flex: none; }
.dd { width: 12px; height: 22px; flex: none; }
.cust { width: 17px; height: 22px; flex-direction: column; gap: 1px; }
.bar { width: 8px; height: 1px; background: #111; }
.doc-title { flex: 1; height: 24px; padding-left: 14px; text-align: center; font-size: 14px; line-height: 18px; color: #0b1a33; }
.info-arrow { width: 13px; height: 23px; border-right: 1px solid #999; }
.search { width: 179px; height: 22px; border: 0; padding: 2px 3px 0; background: #fff; font-size: 11px; font-style: italic; border-radius: 0; }
.search::placeholder { color: #555; opacity: 1; }
.info { padding-right: 2px; }
.signin { width: 116px; height: 22px; gap: 7px; justify-content: flex-start; padding-left: 4px; }
.signin .tri { margin-left: auto; }
.xchg { margin-left: 6px; }
.help { width: 29px; height: 22px; padding-left: 4px; }
.win { align-self: flex-start; display: flex; margin-left: 24px; }
.win button { width: 27px; height: 19px; }
.win .close { width: 44px; background: #cb3a3c; }
.tabs { height: 20px; display: flex; align-items: flex-end; padding-left: 5px; background: #999; color: #151515; }
.tabs button { height: 17px; padding: 0 8px 0 9px; }
.tabs .active { background: linear-gradient(#f0f0f0, #fff); border: 1px solid #ddd; border-bottom: 0; padding: 0 7px 0 8px; }
.tabs .toggle { padding-left: 22px; }

/* ribbon */
.ribbon { height: 94px; display: flex; background: #fff; padding-left: 3px; }
.panel { flex: none; display: flex; flex-direction: column; border-right: 1px solid #b5b5b5; }
.tools { height: 77px; display: flex; padding-top: 4px; border-bottom: 1px solid #e2e2e2; }
.cap { height: 17px; line-height: 17px; text-align: center; border-bottom: 1px solid #ddd; }
.select { width: 55px; }
.build { width: 379px; }
.circ { width: 84px; }
.model { width: 120px; }
.room { width: 236px; }
.opening { width: 152px; }
.datum { width: 64px; }
.plane { width: 125px; border-right: 0; }
.col { display: flex; flex-direction: column; }
.col button { height: 24px; gap: 5px; justify-content: flex-start; }
.col .tri { margin-left: 4px; }
.col button:disabled { color: #b8b8b8; }
.mid { padding-top: 12px; }
.big { width: 38px; height: 72px; flex-direction: column; justify-content: flex-start; line-height: 15px; text-align: center; }
.big svg { margin-bottom: 3px; }
.big .tri { margin-top: 4px; }
.on { width: 44px; margin-left: 5px; border: 1px solid #3a7abf; background: linear-gradient(#d5ebff, #a6d3fb); }
.on svg { margin: 6px 0; }
.build .tools { padding-left: 5px; }
.build .door { margin: 0 5px 0 4px; }
.c1 { width: 107px; }
.c2 { width: 70px; }
.circ .tools, .model .tools, .room .tools, .datum .tools { padding-left: 7px; }
.r1 { width: 119px; }
.opening .tools, .plane .tools { padding-left: 2px; }
.opening .col, .plane .col { margin-left: 6px; }
.opening .col button { gap: 4px; }
.ribbon-rest { flex: 1; background: linear-gradient(#f2f2f2, #999); }
.options { height: 29px; background: #ecedef; border-bottom: 2px solid #777; }

/* main area */
.main { flex: 1; display: flex; background: #ececee; }
.palette { width: 220px; flex: none; display: flex; flex-direction: column; background: #fff; }
.pal-head { height: 18px; padding: 0 6px 0 4px; display: flex; align-items: center; justify-content: space-between; background: #c3d3e8; color: #111; }
.pal-body { flex: 1; margin-top: 2px; padding: 2px 5px 0 4px; border-top: 1px solid #888; border-right: 1px solid #aaa; }
.type { width: 100%; height: 72px; padding: 2px 2px 2px 2px; justify-content: flex-start; border: 1px solid #ccc; border-top: 2px solid #666; border-left: 2px solid #777; }
.thumb { width: 66px; height: 66px; display: flex; align-items: center; justify-content: center; border: 1px solid #ccc; }
.type-name { flex: 1; text-align: left; padding-left: 4px; color: #333; }
.inst { display: flex; gap: 6px; padding: 3px 0 0 1px; }
.combo { position: relative; display: flex; align-items: center; }
.combo svg { position: absolute; right: 3px; pointer-events: none; color: #444; }
.combo select { appearance: none; width: 100%; height: 22px; padding: 0 3px; border: 1px solid #aaa; border-radius: 0; background: linear-gradient(#f5f5f5, #e6e6e6); }
.inst .combo { width: 127px; }
.edit-type { gap: 4px; height: 18px; }
.grid-wrap { display: flex; border-left: 2px solid #888; }
.props { flex: 1; table-layout: fixed; border-collapse: separate; border-spacing: 0; width: 192px; border-right: 1px dotted #666; color: #111; }
.props tr { height: 18px; }
.props td, .props th { height: 18px; padding: 0 0 0 9px; line-height: 17px; font-weight: normal; text-align: left; border-bottom: 1px dotted #555; }
.props td + td { padding-left: 4px; border-left: 1px dotted #555; width: 96px; }
.props td + .tight { padding: 0 1px; }
.props .off td { color: #7a7a7a; }
.props .last td { border-bottom: 0; }
.sec th { background: #e4e4e4; border-bottom: 0; padding-left: 3px; }
.sec svg { float: right; margin: 5px 4px 0 0; }
.props button { width: 100%; height: 17px; padding-top: 1px; line-height: 14px; border: 1px solid #aaa; border-right-color: #777; border-bottom: 2px solid #999; background: linear-gradient(#fff, #e8e8e8); }
.scale { display: block; width: 100%; height: 17px; border: 1px solid #111; padding: 0 5px; background: #fff; border-radius: 0; }
.props input[type="checkbox"] { appearance: none; display: block; width: 13px; height: 13px; margin: 3px 0 0; border: 1px solid #555; background: #fff; }
.scroll { flex: none; width: 17px; display: flex; flex-direction: column; align-items: center; justify-content: space-between; padding: 6px 0; color: #444; }
.thumb-bar { width: 15px; height: 174px; margin: 5px 0 auto; background: #cdcdcd; }
.pal-foot { height: 28px; padding: 0 2px 3px; display: flex; align-items: center; justify-content: space-between; border-left: 2px solid #888; }
.pal-foot a { color: #1461a8; }
.pal-foot button { width: 73px; height: 21px; border: 1px solid #ddd; color: #999; }
.pal-tabs { height: 25px; display: flex; align-items: flex-start; color: #111; border-right: 1px solid #aaa; }
.pal-tabs button { height: 22px; padding: 0 5px; border: 1px solid #222; border-width: 2px 2px 1px 0; border-radius: 0 0 3px 5px; background: #f4f4f4; font-size: 11px; }
.pal-tabs .cur { width: 67px; border-width: 0 2px 1px 0; background: #fff; }

.view { flex: 1; min-width: 0; margin-left: 4px; display: flex; flex-direction: column; border-left: 2px solid #777; background: #fff; }
.canvas { flex: 1; position: relative; }
.scene { width: 100%; }
.doc-buttons { position: absolute; top: 9px; right: 22px; display: flex; align-items: center; gap: 6px; }
.cube { position: absolute; top: 62px; right: 31px; }
.cube-text { font: bold 7px "Liberation Sans", sans-serif; fill: #777; }
.nav { position: absolute; top: 147px; right: 19px; width: 36px; height: 118px; padding: 2px 3px; display: flex; flex-direction: column; align-items: flex-end; justify-content: space-between; border: 2px solid #bbb; border-radius: 6px; background: #fafafa; }
.nav .n { align-self: center; flex-direction: column; gap: 7px; }
.nav .tri { border-top-color: #777; border-width: 3px 3px 0; }
.rule { width: 26px; height: 1px; align-self: center; background: #bbb; }
.vscroll { position: absolute; top: 7px; right: 3px; bottom: 2px; width: 16px; display: flex; flex-direction: column; align-items: center; justify-content: space-between; color: #222; }
.vthumb { width: 16px; height: 17px; background: #d0d0d0; }
.hthumb { position: absolute; left: 65%; bottom: -17px; width: 17px; height: 15px; background: #cbcbcb; }
.pointer { position: absolute; left: 66%; bottom: -8px; }
.viewbar { height: 22px; display: flex; align-items: center; padding: 0 2px 3px 11px; }
.vscale { width: 65px; font-size: 11px; }
.viewbar button { width: 21px; height: 18px; }
.viewbar .right { margin: 0 11px 0 auto; }
.grip { width: 9px; height: 12px; flex: none; background: radial-gradient(circle, #aaa 1px, transparent 1px) 0 0 / 4px 4px; }

/* status bar */
.status { height: 23px; display: flex; align-items: center; border-top: 1px solid #777; background: linear-gradient(#f4f4f4, #dcdcdc); }
.msg { width: 347px; padding-left: 2px; height: 22px; line-height: 22px; font-size: 11px; background: linear-gradient(#e6e6e7, #c8c8ca); }
.sb { width: 26px; height: 20px; }
.status .combo select { height: 20px; background: #fff; border-color: #ddd; }
.status .combo svg { color: #aaa; }
.ws { width: 207px; margin-left: 3px; }
.opt { width: 157px; }
.opt select:disabled { color: #888; opacity: 1; }
.req { margin-left: 1px; }
.cnt { width: 14px; }
.status > .sep { width: 13px; margin-right: 2px; border-color: #ccc; }
.sel { margin-left: auto; display: flex; align-items: center; }
.sel button { width: 26px; height: 20px; }
.sel .filter { width: 24px; }
.sel .low { line-height: 14px; padding-top: 2px; }
.status > .grip { margin: 4px 2px 0 20px; }
.mark { position: absolute; right: 3px; bottom: 21px; font: 26px/23px "Liberation Sans", Arial, sans-serif; color: rgba(105, 110, 105, .5); pointer-events: none; }
```
